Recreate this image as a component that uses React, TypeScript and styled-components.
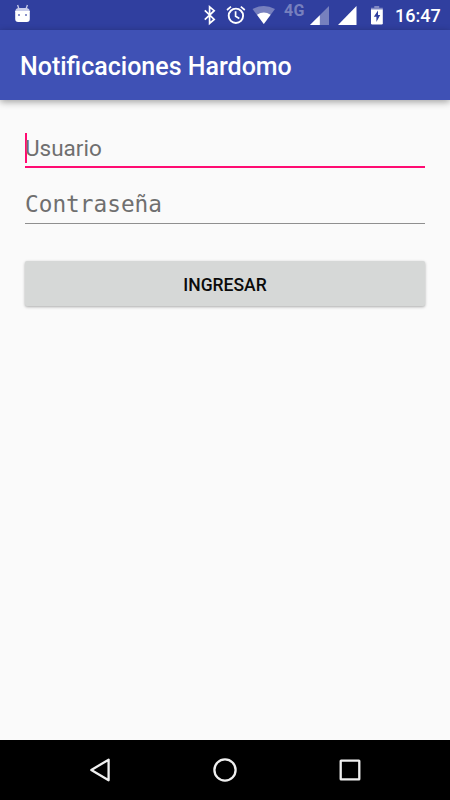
import React from "react";
import styled, { createGlobalStyle } from "styled-components";

const GlobalStyle = createGlobalStyle`
  * { box-sizing: border-box; }
  body { margin: 0; background: #fafafa; font-family: Roboto, sans-serif; }
`;

const Screen = styled.div`
  width: 450px;
  height: 800px;
  display: flex;
  flex-direction: column;
  overflow: hidden;
  background: #fafafa;
`;

const StatusBar = styled.header`
  height: 30px;
  flex: none;
  display: flex;
  align-items: flex-start;
  padding: 0 10px 0 14px;
  background: #303f9f;
`;

const Spacer = styled.div`
  flex: 1;
`;

const StatusIcon = styled.svg<{ $gap?: number }>`
  display: block;
  flex: none;
  margin-right: ${(p) => p.$gap ?? 0}px;
`;

const Network = styled.span`
  width: 22px;
  margin-right: 4px;
  font-size: 16px;
  line-height: 22px;
  font-weight: 700;
  letter-spacing: 0.2px;
  color: #7780be;
`;

const Clock = styled.time`
  width: 45px;
  font-size: 18px;
  line-height: 32px;
  font-weight: 500;
  color: #fff;
`;

const AppBar = styled.div`
  position: relative;
  height: 70px;
  flex: none;
  display: flex;
  align-items: center;
  padding: 3px 20px 0;
  background: #3f51b5;
  box-shadow: 0 2px 7px rgba(0, 0, 0, 0.36);
`;

const Title = styled.h1`
  margin: 0;
  font-size: 25px;
  line-height: 30px;
  font-weight: 500;
  color: #fff;
  white-space: nowrap;
`;

const Form = styled.main`
  flex: 1;
  display: flex;
  flex-direction: column;
  padding: 31px 25px 0;
`;

const Field = styled.div<{ $active?: boolean }>`
  display: flex;
  align-items: center;
  height: ${(p) => (p.$active ? 37 : 38)}px;
  margin-bottom: ${(p) => (p.$active ? 18 : 37)}px;
  padding-bottom: ${(p) => (p.$active ? 2 : 1)}px;
  border-bottom: ${(p) => (p.$active ? "2px solid #ff0b72" : "1px solid #8f8f8f")};
`;

const Caret = styled.span`
  width: 2px;
  height: 30px;
  margin-right: -2px;
  align-self: flex-start;
  margin-top: 2px;
  background: #ff0b72;
`;

const Hint = styled.span<{ $mono?: boolean }>`
  font-family: ${(p) => (p.$mono ? '"DejaVu Sans Mono", monospace' : "Roboto, sans-serif")};
  font-size: ${(p) => (p.$mono ? 22.75 : 22.5)}px;
  line-height: 28px;
  color: #6f6f6f;
`;

const Submit = styled.button`
  height: 45px;
  flex: none;
  border: 0;
  border-radius: 2px;
  padding: 3px 0 0;
  background: #d6d8d7;
  box-shadow: 0 1px 3px rgba(0, 0, 0, 0.32);
  font: 500 17.5px/24px Roboto, sans-serif;
  color: #0b0b0b;
`;

const NavBar = styled.nav`
  height: 60px;
  flex: none;
  display: flex;
  align-items: center;
  justify-content: center;
  gap: 95px;
  background: #000;
`;

const NavIcon = styled.svg`
  display: block;
  width: 30px;
  height: 30px;
  fill: none;
  stroke: #f0f0f0;
  stroke-width: 2.3;
`;

export default function App() {
  return (
    <>
      <GlobalStyle />
      <Screen>
        <StatusBar>
          <StatusIcon width="18" height="30" viewBox="0 0 18 30">
            <path d="M3.6 5 5 9M13.4 5 12 9" stroke="#c9cdea" strokeWidth="1.3" />
            <path d="M1.2 12Q1.2 8 5 8H12Q15.8 8 15.8 12Z" fill="#c9cdea" />
            <path d="M1.2 11H15.8V19Q15.8 22 12.8 22H4.2Q1.2 22 1.2 19Z" fill="#fff" />
            <path d="M4 14h2v2H4zM11 14h2v2h-2z" fill="#8b93cb" />
          </StatusIcon>
          <Spacer />
          <StatusIcon width="14" height="30" viewBox="0 0 14 30" $gap={9}>
            <path d="M1.8 10.4 11.2 19.5 6.6 23.4V6.8L11.2 10.7 1.8 19.7" fill="none" stroke="#fff" strokeWidth="1.7" />
          </StatusIcon>
          <StatusIcon width="20" height="30" viewBox="0 0 20 30" $gap={6}>
            <circle cx="9.9" cy="15.8" r="7.2" fill="none" stroke="#fff" strokeWidth="1.9" />
            <path d="M9.6 11.3V16.3L13.3 18.5M1 10 5 6.7M14.8 6.7 18.8 10" fill="none" stroke="#fff" strokeWidth="1.7" />
          </StatusIcon>
          <StatusIcon width="24" height="30" viewBox="0 0 24 30" $gap={8}>
            <path d="M.5 9Q11.8 3 23 9L11.8 24Z" fill="#7780be" />
            <path d="M5 14.7Q11.8 10.5 18.6 14.7L11.8 24Z" fill="#fff" />
          </StatusIcon>
          <Network>4G</Network>
          <StatusIcon width="20" height="30" viewBox="0 0 20 30" $gap={8}>
            <path d="M0 25 19 6V25Z" fill="#7780be" />
            <path d="M0 25 9.8 15.2V25Z" fill="#fff" />
          </StatusIcon>
          <StatusIcon width="20" height="30" viewBox="0 0 20 30" $gap={12}>
            <path d="M0 25 18.5 6V25Z" fill="#fff" />
          </StatusIcon>
          <StatusIcon width="15" height="30" viewBox="0 0 15 30" $gap={10}>
            <path d="M1 10V7.8h3.3V6h4.9v1.8h3.6V10Z" fill="#8088c3" />
            <path d="M1 9.5h11.8V23.3q0 1.2-1.2 1.2H2.2Q1 24.5 1 23.3Z" fill="#fff" />
            <path d="M8 10.5 3.8 16.8H6.4V22L10.2 15H8Z" fill="#303f9f" />
          </StatusIcon>
          <Clock>16:47</Clock>
        </StatusBar>
        <AppBar>
          <Title>Notificaciones Hardomo</Title>
        </AppBar>
        <Form>
          <Field $active>
            <Caret />
            <Hint>Usuario</Hint>
          </Field>
          <Field>
            <Hint $mono>Contraseña</Hint>
          </Field>
          <Submit>INGRESAR</Submit>
        </Form>
        <NavBar>
          <NavIcon viewBox="0 0 30 30">
            <path d="M6.3 15 23.6 4.7V25.3Z" strokeLinejoin="round" />
          </NavIcon>
          <NavIcon viewBox="0 0 30 30">
            <circle cx="15" cy="15" r="10.6" />
          </NavIcon>
          <NavIcon viewBox="0 0 30 30">
            <rect x="5.7" y="5.7" width="18.6" height="18.6" rx=".4" />
          </NavIcon>
        </NavBar>
      </Screen>
    </>
  );
}
